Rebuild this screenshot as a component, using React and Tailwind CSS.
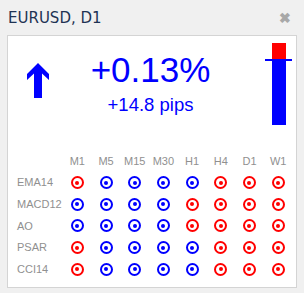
import React from 'react';

const frames = ['M1', 'M5', 'M15', 'M30', 'H1', 'H4', 'D1', 'W1'];

// 1 = up (blue), 0 = down (red)
const rows = [
  { name: 'EMA14', sig: [0, 1, 1, 1, 1, 0, 0, 0] },
  { name: 'MACD12', sig: [1, 1, 1, 1, 0, 0, 0, 0] },
  { name: 'AO', sig: [1, 1, 1, 1, 0, 0, 0, 0] },
  { name: 'PSAR', sig: [0, 1, 1, 1, 1, 0, 0, 0] },
  { name: 'CCI14', sig: [0, 1, 1, 1, 1, 0, 0, 0] },
];

const Dot = ({ up }) => (
  <div
    className={`w-[13px] h-[13px] rounded-full border-2 flex items-center justify-center ${
      up ? 'border-[#0000ff]' : 'border-[#ff0000]'
    }`}
  >
    <div className={`w-[4px] h-[4px] rounded-full ${up ? 'bg-[#0000ff]' : 'bg-[#ff0000]'}`} />
  </div>
);

export default function App() {
  return (
    <div className="w-[304px] h-[293px] bg-[#f0f0f0] flex flex-col font-['Liberation_Sans',Arial,sans-serif]">
      <div className="h-[35px] flex items-center justify-between pl-[8px] pr-[13px]">
        <span className="text-[15px] text-[#1e3354] font-['DejaVu_Sans',sans-serif] pt-[2px]">EURUSD, D1</span>
        <span className="text-[14px] text-[#a8a8a8] font-bold leading-none">✖</span>
      </div>
      <div className="mx-[7px] h-[253px] border border-[#d4d4d4] bg-white flex flex-col">
        <div className="h-[100px] relative flex">
          <div className="w-[24px] ml-[19px] mt-[27px]">
            <svg width="22" height="36" viewBox="0 0 22 36">
              <path d="M11 0 L22 11 L22 17 L15 10.5 L15 35 L7 35 L7 10.5 L0 17 L0 11 Z" fill="#0000ff" />
            </svg>
          </div>
          <div className="flex-1 flex flex-col items-center text-[#0000ff] mr-[46px]">
            <div className="text-[35px] leading-none mt-[16px]">+0.13%</div>
            <div className="text-[18.5px] leading-none mt-[9px]">+14.8 pips</div>
          </div>
          <div className="absolute left-[257px] top-[7px] w-[27px] flex flex-col items-center">
            <div className="w-[14px] h-[16px] bg-[#ff0000]" />
            <div className="w-[27px] h-[2px] bg-[#0000ff]" />
            <div className="w-[14px] h-[64px] bg-[#0000ff]" />
          </div>
        </div>
        <div className="pl-[9px] pt-[14px] text-[11px] text-[#909090]">
          <div className="grid grid-cols-[46px_repeat(8,28.7px)] auto-rows-[21.7px] items-center">
            <div />
            {frames.map((f) => (
              <div key={f} className="text-center">{f}</div>
            ))}
            {rows.map((r) => (
              <React.Fragment key={r.name}>
                <div>{r.name}</div>
                {r.sig.map((s, i) => (
                  <div key={i} className="flex justify-center">
                    <Dot up={s === 1} />
                  </div>
                ))}
              </React.Fragment>
            ))}
          </div>
        </div>
      </div>
    </div>
  );
}
